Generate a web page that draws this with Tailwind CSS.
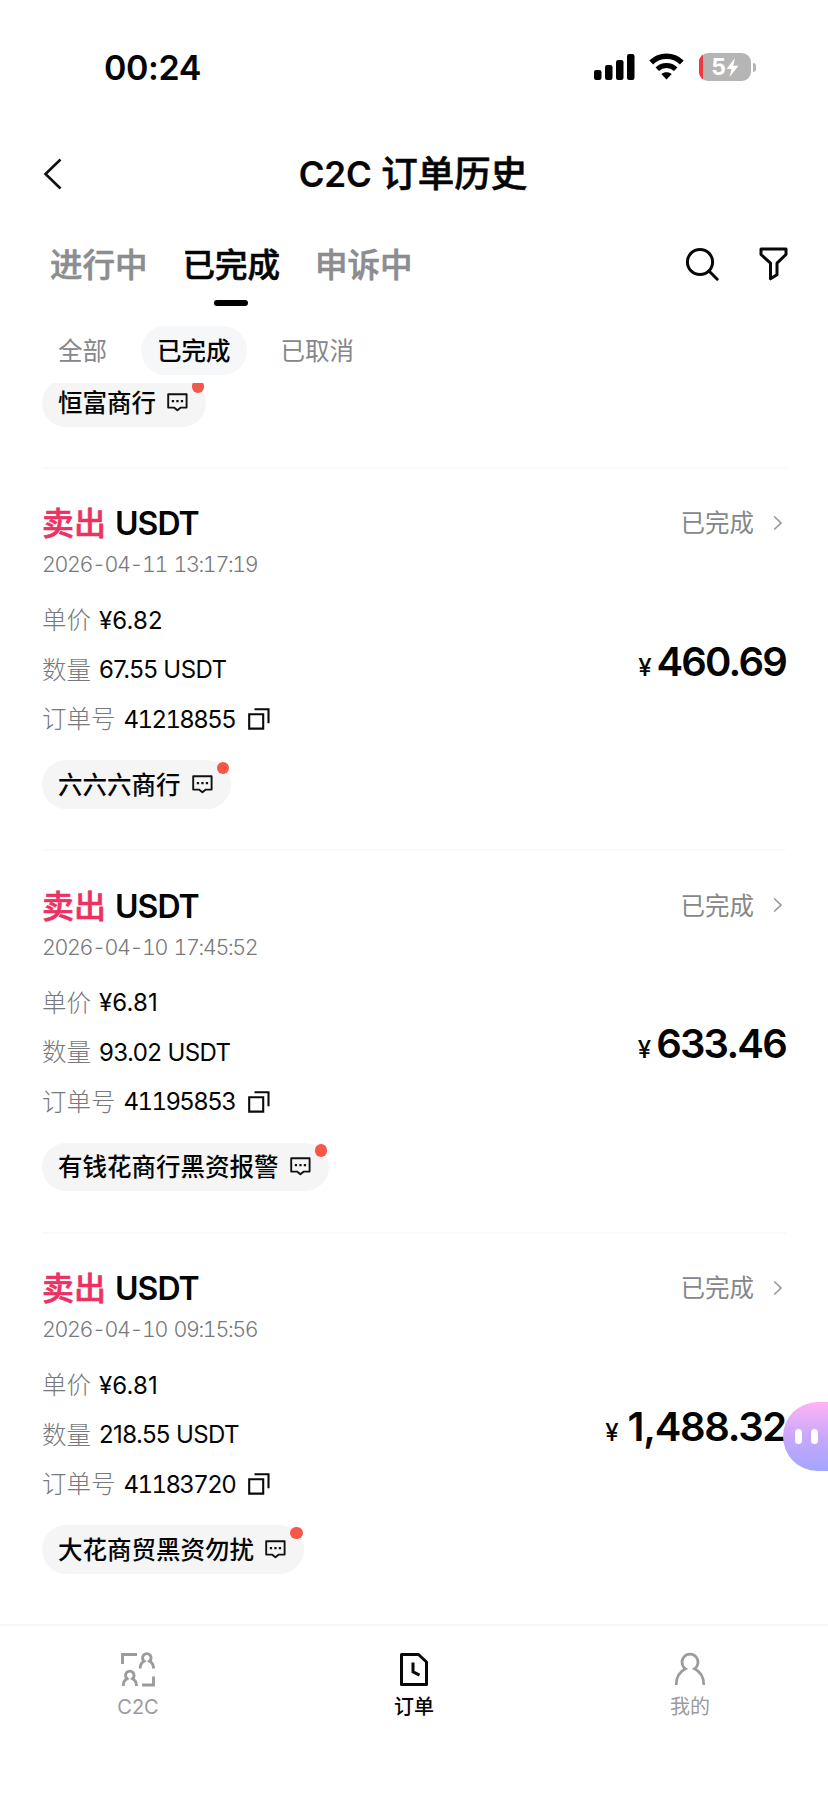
<!DOCTYPE html>
<html lang="zh-CN">
<head>
<meta charset="utf-8">
<title>C2C 订单历史</title>
<script src="https://cdn.jsdelivr.net/npm/@tailwindcss/browser@4"></script>
</head>
<body class="bg-white">
<svg class="hidden">
  <symbol id="chat" viewBox="0 0 21 19"><path d="M1.2 1.2h18.4v13.4h-5.8l-3.4 2.7-3.4-2.7H1.200z" fill="none" stroke="#111" stroke-width="1.9" stroke-linejoin="round"/><path d="M4.800 7h2.300v2.300H4.800zM9.300 7h2.300v2.300H9.300zM13.800 7h2.300v2.300h-2.300z" fill="#111"/></symbol>
  <symbol id="copy" viewBox="0 0 22 22"><path d="M1.200 6.200h14v14.400h-14zM6.500 1.200h14v14" fill="none" stroke="#0a0a0a" stroke-width="2.100"/></symbol>
  <symbol id="chev" viewBox="0 0 10 16"><path d="M1.200 1.500 8 8l-6.800 6.500" fill="none" stroke="#999" stroke-width="1.700"/></symbol>
</svg>
<div class="relative flex h-[1801px] w-[828px] flex-col overflow-hidden bg-white font-['Inter','Noto_Sans_CJK_SC',sans-serif] text-[#050505]">
  <header class="flex h-[134px] shrink-0 justify-between pl-[104px] pr-[72px]">
    <div class="flex h-[134px] items-center text-[34px] font-semibold tracking-[-0.4px]">00:24</div>
    <div class="flex h-[134px] items-center">
      <svg class="mr-[14px] h-[28px] w-[42px]" viewBox="0 0 42 28"><rect x="1" y="17" width="7.500" height="10" rx="2.200"/><rect x="12" y="12" width="7.500" height="15" rx="2.200"/><rect x="23" y="7" width="7.500" height="20" rx="2.200"/><rect x="34" y="1" width="7.500" height="26" rx="2.200"/></svg>
      <svg class="mr-[15px] h-[28px] w-[35px]" viewBox="0 0 35 28"><path d="M2.200 9.500a22 22 0 0 1 30.600 0" fill="none" stroke="#000" stroke-width="5.400"/><path d="M8.300 16.200a13.200 13.200 0 0 1 18.400 0" fill="none" stroke="#000" stroke-width="5"/><path d="m17.500 26.500-5.200-5.400c3-2.500 7.400-2.500 10.400 0z"/></svg>
      <div class="relative flex h-[28px] w-[52px] items-center justify-center overflow-hidden rounded-[9px] bg-[#b5b5b5]">
        <div class="absolute inset-y-0 left-0 w-[4px] bg-[#f0383e]"></div>
        <span class="text-[23px] font-bold leading-none text-white">5</span>
        <svg class="h-[21px] w-[13px]" viewBox="0 0 13 21"><path d="M9 1 .5 12h5L3.500 20 12.500 8.800H7.300z" fill="#fff"/></svg>
      </div>
      <div class="ml-[2px] h-[9px] w-[3px] rounded-r-full bg-[#b5b5b5]"></div>
    </div>
  </header>
  <div class="relative flex h-[80px] shrink-0 items-center justify-center">
    <svg class="absolute left-[43px] top-[24px] h-[32px] w-[20px]" viewBox="0 0 20 32"><path d="M17.500 1.500 2.500 16l15 14.500" fill="none" stroke="#111" stroke-width="2.600"/></svg>
    <h1 class="mr-[2px] pt-px text-[36.500px] font-medium [-webkit-text-stroke:0.6px]"><span class="text-[35px] font-semibold tracking-[-0.2px] [-webkit-text-stroke:0.200px]">C2C</span> 订单历史</h1>
  </div>
  <div class="flex h-[112px] shrink-0 items-start pl-[50px] pr-[40px] text-[32.500px] font-medium text-[#8b8d90] [-webkit-text-stroke:0.6px]">
    <div class="mr-[35px] flex h-[104px] items-center">进行中</div>
    <div class="relative mr-[35px] flex h-[104px] items-center text-[#050505]">已完成<div class="absolute bottom-[12px] left-1/2 h-[6px] w-[34px] -translate-x-1/2 rounded-full bg-black"></div></div>
    <div class="flex h-[104px] items-center">申诉中</div>
    <div class="ml-auto flex h-[100px] items-center">
      <svg class="mr-[40px] h-[34px] w-[34px]" viewBox="0 0 34 34"><circle cx="15" cy="15" r="12.600" fill="none" stroke="#080808" stroke-width="3"/><path d="m24 24 8.200 8.200" stroke="#080808" stroke-width="3" stroke-linecap="round"/></svg>
      <svg class="h-[34px] w-[29px]" viewBox="0 0 29 34"><path d="M2 2h25v5.500l-9 8.700v11.600l-6.500 4V16.200L2 7.500z" fill="none" stroke="#080808" stroke-width="3" stroke-linejoin="round"/></svg>
    </div>
  </div>
  <div class="flex h-[57px] shrink-0 items-start pl-[41.500px] text-[24.500px] text-[#85878a]">
    <div class="flex h-[49px] items-center px-[16.500px] pt-[2px]">全部</div>
    <div class="ml-[17px] flex h-[49px] items-center rounded-full bg-[#f5f7f8] px-[16.500px] pt-[2px] font-medium text-[#050505]">已完成</div>
    <div class="ml-[17px] flex h-[49px] items-center px-[16.500px] pt-[2px]">已取消</div>
  </div>
  <main id="list" class="min-h-0 flex-1 overflow-hidden px-[42px]">
    <div class="-mt-[4.500px] flex h-[88px] items-start">
      <div class="relative flex h-[48.500px] items-center rounded-full bg-[#f5f5f5] pl-[16px] pr-[18px] text-[24.500px] font-medium"><span class="pt-[2px]">恒富商行</span><svg class="ml-[11px] h-[19px] w-[21px]"><use href="#chat"/></svg><div class="absolute right-[2px] top-[1.500px] size-[12.500px] rounded-full bg-[#f05a4c]"></div></div>
    </div>
  </main>
  <nav class="grid h-[177px] shrink-0 grid-cols-3 border-t-2 border-[#f6f6f6] pt-[25px] text-[20px] text-[#9b9b9b]">
    <div class="flex flex-col items-center">
      <svg class="h-[38px] w-[36px]" viewBox="0 0 36 38" fill="none" stroke="#9b9b9b" stroke-width="2.900"><path d="M2.500 13V3.500H17M33.500 25.500V34H22"/><path d="M20.200 17.500c0-4 1.300-6 3.800-7.300a4.300 4.300 0 1 1 5.600 0c2.500 1.300 3.900 3.300 3.900 7.300M3.200 35c0-4 1.300-6 3.800-7.300a4.300 4.300 0 1 1 5.600 0c2.500 1.300 3.900 3.300 3.900 7.300"/></svg>
      <span class="mt-[4px] leading-[28px]">C2C</span>
    </div>
    <div class="flex flex-col items-center font-medium text-[#050505]">
      <svg class="h-[38px] w-[36px]" viewBox="0 0 36 38" fill="none" stroke="#080808" stroke-width="3"><path d="M5.500 3.500h17l8 7.500v22.500h-25z" stroke-linejoin="round"/><path d="M17 11.500v9.300l6.500 3.400"/></svg>
      <span class="mt-[4px] leading-[28px]">订单</span>
    </div>
    <div class="flex flex-col items-center">
      <svg class="h-[38px] w-[36px]" viewBox="0 0 36 38" fill="none" stroke="#9b9b9b" stroke-width="2.700"><path d="M4.200 34c0-9 3.600-13.500 9.300-16.200a8 8 0 1 1 9 0C28.200 20.500 31.800 25 31.800 34"/></svg>
      <span class="mt-[4px] leading-[28px]">我的</span>
    </div>
  </nav>
  <div class="absolute right-0 top-[1402px] flex h-[69px] w-[45px] items-center gap-[9px] rounded-l-full bg-linear-to-b from-[#ffb3f3] via-[#c8a8fb] to-[#a3a5ff] pl-[12px]">
    <div class="h-[15px] w-[7px] rounded-full bg-white"></div><div class="h-[15px] w-[7px] rounded-full bg-white"></div>
  </div>
</div>
<script>
const orders = [
  ['2026-04-11 13:17:19', '6.82', '67.55', '41218855', '460.69', '六六六商行'],
  ['2026-04-10 17:45:52', '6.81', '93.02', '41195853', '633.46', '有钱花商行黑资报警'],
  ['2026-04-10 09:15:56', '6.81', '218.55', '41183720', '1,488.32', '大花商贸黑资勿扰'],
];
document.getElementById('list').insertAdjacentHTML('beforeend', orders.map(([date, price, qty, no, total, shop]) => `
<section class="flex h-[382.500px] flex-col items-start border-t-2 border-[#fafafa] pt-[31px]">
  <div class="flex h-[48px] w-full items-center">
    <span class="pt-px text-[32px] font-medium text-[#ec3263] [-webkit-text-stroke:0.6px]">卖出</span>
    <span class="ml-[9px] pt-px text-[32px] font-semibold tracking-[-1px]">USDT</span>
    <span class="ml-auto text-[24.500px] text-[#85878a]">已完成</span>
    <svg class="ml-[19px] mr-[3px] mb-[2px] h-[16px] w-[10px]"><use href="#chev"/></svg>
  </div>
  <div class="flex h-[34px] items-center text-[21.500px] font-light tabular-nums tracking-[-1.4px] [word-spacing:2px] text-[#77797c]">${date}</div>
  <div class="mt-[14px] flex w-full items-center justify-between">
    <div class="text-[24px] tracking-[-0.6px]">
      <div class="flex h-[49.500px] items-center"><span class="mr-[8px] pt-px text-[24.500px] font-light tracking-normal text-[#77797c]">单价</span><span class="pt-px tracking-[0.1px]">¥${price}</span></div>
      <div class="flex h-[49.500px] items-center"><span class="mr-[8px] pt-px text-[24.500px] font-light tracking-normal text-[#77797c]">数量</span><span class="pt-px">${qty} USDT</span></div>
      <div class="flex h-[49.500px] items-center"><span class="mr-[8px] pt-px text-[24.500px] font-light tracking-normal text-[#77797c]">订单号</span><span class="pt-px tabular-nums tracking-[-1.600px]">${no}</span><svg class="ml-[13px] h-[22px] w-[22px]"><use href="#copy"/></svg></div>
    </div>
    <div class="mb-[16px] flex items-baseline"><span class="${total.length > 6 ? 'mr-[9px]' : 'mr-[5px]'} text-[24px] font-medium">¥</span><span class="text-[40px] font-semibold ${total.length > 6 ? 'tracking-[-1.3px]' : 'tracking-[-1.8px]'}">${total}</span></div>
  </div>
  <div class="relative mt-[16px] flex h-[48.500px] items-center rounded-full bg-[#f5f5f5] pl-[16px] pr-[18px] text-[24.500px] font-medium"><span class="pt-[2px]">${shop}</span><svg class="ml-[11px] h-[19px] w-[21px]"><use href="#chat"/></svg><div class="absolute right-[1.500px] top-[1.500px] size-[12.500px] rounded-full bg-[#f9564a]"></div></div>
</section>`).join(''));
</script>
</body>
</html>
